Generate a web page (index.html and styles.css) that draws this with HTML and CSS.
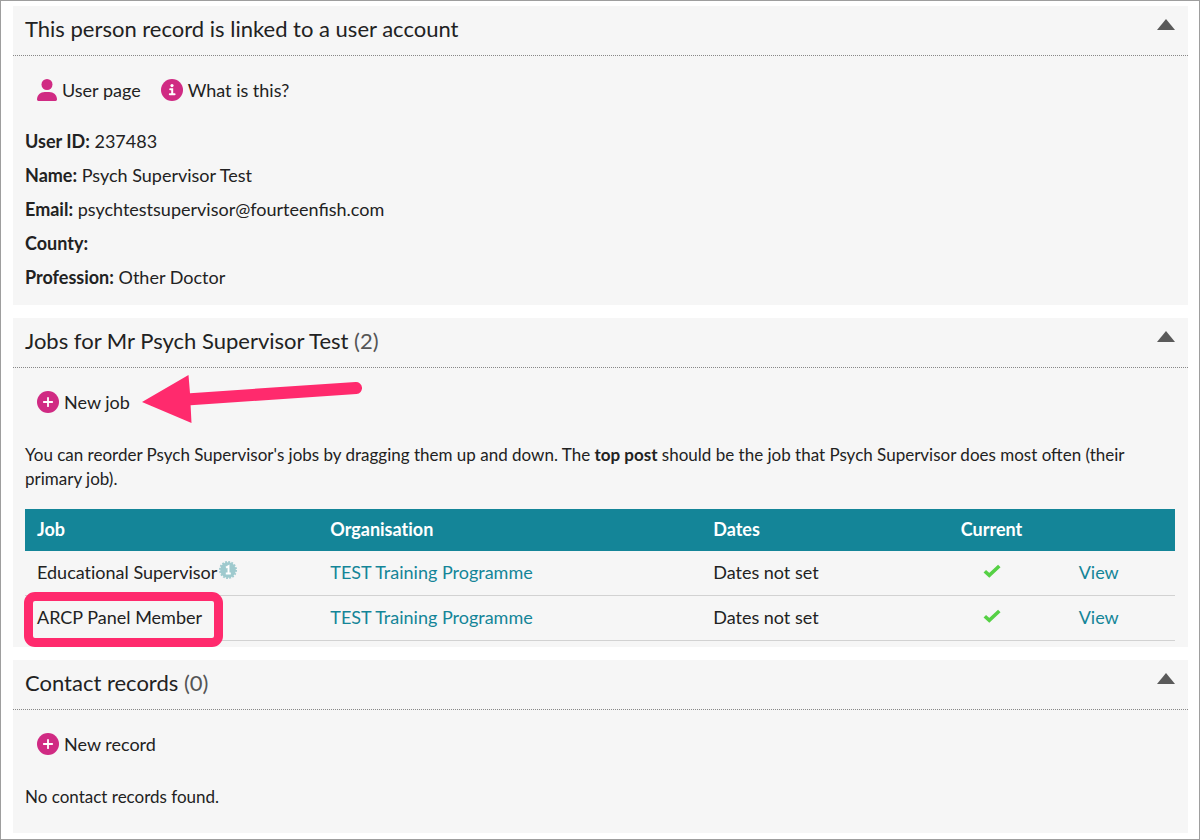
FILE: index.html
```
<!DOCTYPE html>
<html lang="en">
<head>
  <meta charset="utf-8">
  <title>Person record</title>
  <meta name="viewport" content="width=device-width, initial-scale=1.0">
  <link rel="stylesheet" href="styles.css">
</head>
<body>
  <svg class="sprite" aria-hidden="true">
    <symbol id="icon-plus" viewBox="0 0 22 22">
      <circle cx="11" cy="11" r="11" fill="#d02a83"/>
      <path d="M11 6.8v8.4M6.8 11h8.4" stroke="#fff" stroke-width="1.8" stroke-linecap="round"/>
    </symbol>
    <symbol id="icon-check" viewBox="0 0 18 14">
      <path d="M1.8 7.2L6.3 11.4L16.3 2" fill="none" stroke="#56d145" stroke-width="3.6"/>
    </symbol>
    <symbol id="icon-up" viewBox="0 0 18 11">
      <path d="M9 0L18 11H0z" fill="#5a5a5a"/>
    </symbol>
  </svg>

  <main class="page">
    <section class="panel">
      <header class="panel-header">
        <h2>This person record is linked to a user account</h2>
        <button type="button" class="toggle" aria-label="Collapse"><svg><use href="#icon-up"/></svg></button>
      </header>
      <div class="panel-body account-body">
        <div class="toolbar">
          <a href="#" class="tool">
            <svg class="icon icon-user" viewBox="0 0 20 22">
              <circle cx="10" cy="5.5" r="5.5" fill="#d02a83"/>
              <path d="M0 20.6C0 16 3.4 13 7.8 13h4.4c4.4 0 7.8 3 7.8 7.6 0 .8-.6 1.4-1.4 1.4H1.4C.6 22 0 21.4 0 20.6z" fill="#d02a83"/>
            </svg>
            User page
          </a>
          <a href="#" class="tool">
            <svg class="icon" viewBox="0 0 22 22">
              <circle cx="11" cy="11" r="11" fill="#d02a83"/>
              <circle cx="11" cy="6.6" r="1.6" fill="#fff"/>
              <path d="M9.2 10.2h2v5M8.8 15.3h4.8" fill="none" stroke="#fff" stroke-width="2" stroke-linecap="round"/>
            </svg>
            What is this?
          </a>
        </div>
        <ul class="details">
          <li><b>User ID:</b> 237483</li>
          <li><b>Name:</b> Psych Supervisor Test</li>
          <li><b>Email:</b> psychtestsupervisor@fourteenfish.com</li>
          <li><b>County:</b></li>
          <li><b>Profession:</b> Other Doctor</li>
        </ul>
      </div>
    </section>

    <section class="panel">
      <header class="panel-header">
        <h2>Jobs for Mr Psych Supervisor Test <span class="count">(2)</span></h2>
        <button type="button" class="toggle" aria-label="Collapse"><svg><use href="#icon-up"/></svg></button>
      </header>
      <div class="panel-body jobs-body">
        <div class="toolbar">
          <a href="#" class="tool">
            <svg class="icon"><use href="#icon-plus"/></svg>
            New job
            <svg class="arrow" viewBox="0 0 220 48" aria-hidden="true">
              <path d="M0 27L46.5 0L48 18.2L213.5 7A6 6 0 0 1 214.5 19L48.6 30.2L49.5 48z" fill="#ff2a6d"/>
            </svg>
          </a>
        </div>
        <p>You can reorder Psych Supervisor's jobs by dragging them up and down. The <b>top post</b> should be the job that Psych Supervisor does most often (their primary job).</p>
        <table class="jobs">
          <thead>
            <tr>
              <th class="col-job">Job</th>
              <th class="col-org">Organisation</th>
              <th class="col-dates">Dates</th>
              <th class="col-current">Current</th>
              <th class="col-view"></th>
            </tr>
          </thead>
          <tbody>
            <tr>
              <td>Educational Supervisor<svg class="primary" viewBox="0 0 18 18">
                  <circle cx="9" cy="9" r="7.8" fill="#9fcace"/>
                  <circle cx="9" cy="9" r="8" fill="none" stroke="#9fcace" stroke-width="2" stroke-dasharray="1.8 1.342"/>
                  <path d="M7 6.6L9.5 5.2V12.5M6.8 12.5h5" fill="none" stroke="#fff" stroke-width="1.9"/>
                </svg>
              </td>
              <td><a href="#">TEST Training Programme</a></td>
              <td>Dates not set</td>
              <td class="col-current"><svg class="check"><use href="#icon-check"/></svg></td>
              <td class="col-view"><a href="#">View</a></td>
            </tr>
            <tr>
              <td><span class="highlight">ARCP Panel Member</span></td>
              <td><a href="#">TEST Training Programme</a></td>
              <td>Dates not set</td>
              <td class="col-current"><svg class="check"><use href="#icon-check"/></svg></td>
              <td class="col-view"><a href="#">View</a></td>
            </tr>
          </tbody>
        </table>
      </div>
    </section>

    <section class="panel">
      <header class="panel-header">
        <h2>Contact records <span class="count">(0)</span></h2>
        <button type="button" class="toggle" aria-label="Collapse"><svg><use href="#icon-up"/></svg></button>
      </header>
      <div class="panel-body">
        <div class="toolbar">
          <a href="#" class="tool">
            <svg class="icon"><use href="#icon-plus"/></svg>
            New record
          </a>
        </div>
        <p>No contact records found.</p>
      </div>
    </section>
  </main>
</body>
</html>
```
FILE: styles.css
```
* {
  box-sizing: border-box;
}

body {
  margin: 0;
  background-color: #fff;
  color: #222;
  font-family: Lato, sans-serif;
  font-size: 18px;
  line-height: 24px;
}

.sprite {
  display: none;
}

.page {
  display: flex;
  flex-direction: column;
  gap: 13px;
  min-height: 100vh;
  padding: 5px 11px 6px 12px;
  border: 1px solid #9e9e9e;
}

.panel {
  background-color: #f6f6f6;
}

.panel-header {
  display: flex;
  justify-content: space-between;
  align-items: flex-start;
  padding: 7px 13px 10px 12px;
  border-bottom: 1px dotted #888;
}

h2 {
  margin: 0;
  font-size: 22px;
  font-weight: 400;
  line-height: 32px;
}

.count {
  color: #555;
}

.toggle {
  margin-top: 6px;
  padding: 0;
  border: none;
  background: none;
  cursor: pointer;
}

.toggle svg {
  display: block;
  width: 18px;
  height: 11px;
}

.panel-body {
  padding: 22px 13px 24px 12px;
}

.account-body {
  padding-bottom: 16px;
}

.jobs-body {
  padding-bottom: 6px;
}

.toolbar {
  display: flex;
  gap: 20px;
  padding: 0 12px;
  margin-bottom: 27px;
}

.tool {
  display: flex;
  align-items: center;
  gap: 5px;
  position: relative;
  color: #222;
  text-decoration: none;
}

.icon {
  width: 22px;
  height: 22px;
}

.icon-user {
  width: 20px;
}

.details {
  display: flex;
  flex-direction: column;
  gap: 10px;
  margin: 0;
  padding: 0;
  list-style: none;
}

p {
  margin: 0;
  padding-top: 2px;
  font-size: 17px;
}

.jobs {
  width: 100%;
  margin-top: 18px;
  border-spacing: 0;
  table-layout: fixed;
  font-variant-ligatures: none;
}

.jobs th {
  height: 42px;
  padding: 0 12px 2px;
  background-color: #148598;
  color: #fff;
  text-align: left;
}

.jobs td {
  height: 45px;
  padding: 0 12px 2px;
  border-bottom: 1px solid #d2d2d2;
}

.jobs a {
  color: #148598;
  text-decoration: none;
}

.col-job {
  width: 25.5%;
}

.col-org {
  width: 33.3%;
}

.col-dates {
  width: 21.5%;
}

.jobs .col-current {
  width: 7.5%;
  padding: 0 0 2px;
  text-align: center;
}

.jobs .col-view {
  padding-left: 44px;
}

.primary {
  width: 18px;
  height: 18px;
  margin-left: 2px;
}

.check {
  width: 18px;
  height: 14px;
  vertical-align: 1px;
}

.highlight {
  position: relative;
}

/* marker drawn over the job name */
.highlight::after {
  content: "";
  position: absolute;
  inset: -14px -21px -19px -13px;
  border: 9px solid #ff2a6d;
  border-radius: 11px;
}

.arrow {
  position: absolute;
  top: -15px;
  left: 105px;
  width: 220px;
  height: 48px;
}
```
